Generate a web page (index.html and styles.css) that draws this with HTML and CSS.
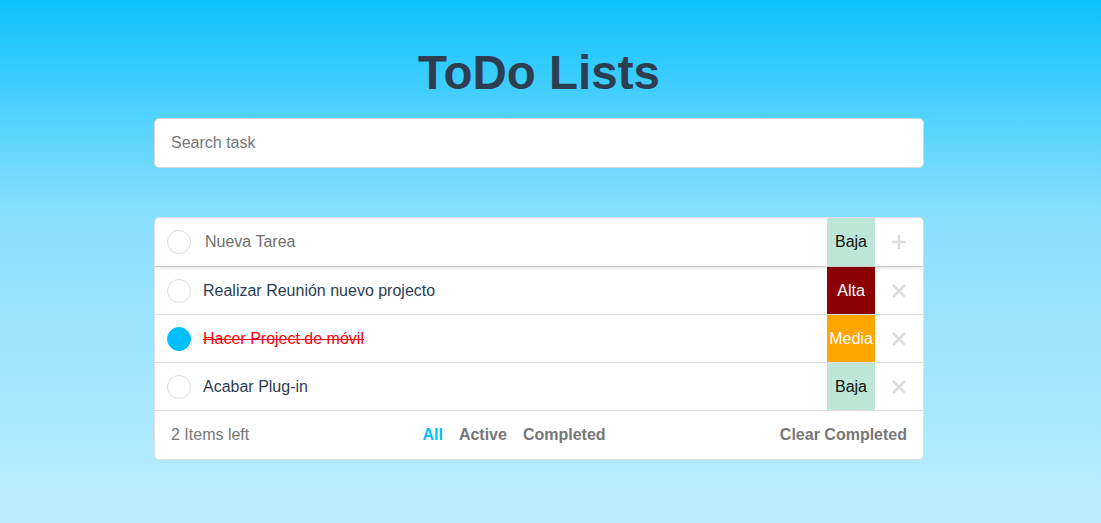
FILE: index.html
```html
<!DOCTYPE html>
<html lang="es">
<head>
<meta charset="utf-8">
<title>ToDo Lists</title>
<link rel="stylesheet" href="styles.css">
</head>
<body>
<main class="app">
  <h1 class="title">ToDo Lists</h1>
  <input class="search" type="text" placeholder="Search task">
  <section class="card">
    <div class="row row-new">
      <span class="check"></span>
      <input class="new-input" type="text" placeholder="Nueva Tarea">
      <span class="prio prio-baja">Baja</span>
      <span class="action">
        <svg width="16" height="16" viewBox="0 0 16 16"><path d="M8 1v14M1 8h14" stroke="#dcdcdc" stroke-width="2.6" fill="none"/></svg>
      </span>
    </div>
    <div class="row">
      <span class="check"></span>
      <span class="task">Realizar Reunión nuevo projecto</span>
      <span class="prio prio-alta">Alta</span>
      <span class="action">
        <svg width="16" height="16" viewBox="0 0 16 16"><path d="M2 2l12 12M14 2L2 14" stroke="#dcdcdc" stroke-width="2.6" fill="none"/></svg>
      </span>
    </div>
    <div class="row">
      <span class="check check-done"></span>
      <span class="task task-done">Hacer Project de móvil</span>
      <span class="prio prio-media">Media</span>
      <span class="action">
        <svg width="16" height="16" viewBox="0 0 16 16"><path d="M2 2l12 12M14 2L2 14" stroke="#dcdcdc" stroke-width="2.6" fill="none"/></svg>
      </span>
    </div>
    <div class="row">
      <span class="check"></span>
      <span class="task">Acabar Plug-in</span>
      <span class="prio prio-baja">Baja</span>
      <span class="action">
        <svg width="16" height="16" viewBox="0 0 16 16"><path d="M2 2l12 12M14 2L2 14" stroke="#dcdcdc" stroke-width="2.6" fill="none"/></svg>
      </span>
    </div>
    <footer class="footer">
      <span class="left">2 Items left</span>
      <nav class="filters">
        <span class="filter filter-active">All</span>
        <span class="filter">Active</span>
        <span class="filter">Completed</span>
      </nav>
      <span class="clear">Clear Completed</span>
    </footer>
  </section>
</main>
</body>
</html>
```
FILE: styles.css
```css
* { box-sizing: border-box; }
html, body { height: 100%; }
body {
  margin: 0;
  font-family: "Liberation Sans", Arial, sans-serif;
  background: linear-gradient(180deg, #0dc2ff 0%, #87dffd 40%, #bcedfe 100%);
  color: #2c3e50;
}
.app {
  width: 770px;
  margin: 0 0 0 154px;
  padding-top: 44px;
}
.title {
  margin: 0 0 16px;
  text-align: center;
  font-size: 47.5px;
  line-height: 58px;
  font-weight: 700;
  color: #2c3e50;
}
.search {
  display: block;
  width: 100%;
  height: 50px;
  border: 1px solid #d6d6d6;
  border-radius: 5px;
  padding: 0 16px;
  font-family: inherit;
  font-size: 16px;
  color: #2c3e50;
  background: #fff;
  outline: none;
}
.search::placeholder { color: #757575; }
.card {
  margin-top: 49px;
  background: #fff;
  border-radius: 5px;
  border: 1px solid #dedede;
  overflow: hidden;
}
.row {
  display: flex;
  align-items: stretch;
  height: 48px;
  border-top: 1px solid #dedede;
}
.row:first-child { border-top: none; }
.row-new {
  height: 48px;
  box-shadow: 0 2px 4px rgba(0,0,0,0.12);
  position: relative;
  z-index: 1;
}
.check {
  flex: 0 0 auto;
  width: 24px;
  height: 24px;
  margin: auto 12px auto 12px;
  border: 1px solid #dcdcdc;
  border-radius: 50%;
}
.check-done {
  background: #00bfff;
  border-color: #00bfff;
}
.task, .new-input {
  flex: 1;
  align-self: center;
  font-size: 16px;
  color: #2c3e50;
}
.new-input {
  border: none;
  outline: none;
  padding: 0 0 0 2px;
  font-family: inherit;
  height: 100%;
}
.new-input::placeholder { color: #6f6f6f; }
.task-done {
  color: #ff0000;
  text-decoration: line-through;
}
.prio {
  flex: 0 0 48px;
  display: flex;
  align-items: center;
  justify-content: center;
  font-size: 16px;
}
.prio-baja { background: #bde6d7; color: #111; }
.prio-alta { background: #8b0000; color: #fff; }
.prio-media { background: #ffa500; color: #fff; }
.action {
  flex: 0 0 48px;
  display: flex;
  align-items: center;
  justify-content: center;
}
.footer {
  display: flex;
  align-items: center;
  height: 49px;
  padding: 0 16px 0 16px;
  border-top: 1px solid #dedede;
  font-size: 16px;
  color: #777;
}
.left { flex: 1; }
.filters {
  display: flex;
  gap: 16px;
  font-weight: 700;
  margin-right: 50px;
}
.filter-active { color: #00bfff; }
.clear {
  flex: 1;
  text-align: right;
  font-weight: 700;
}
```
